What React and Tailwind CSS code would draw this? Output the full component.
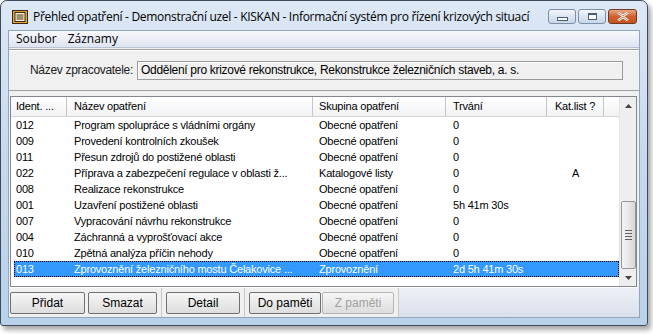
import React from "react";

const rows = [
  ["012", "Program spolupráce s vládními orgány", "Obecné opatření", "0", ""],
  ["009", "Provedení kontrolních zkoušek", "Obecné opatření", "0", ""],
  ["011", "Přesun zdrojů do postižené oblasti", "Obecné opatření", "0", ""],
  ["022", "Příprava a zabezpečení regulace v oblasti ž...", "Katalogové listy", "0", "A"],
  ["008", "Realizace rekonstrukce", "Obecné opatření", "0", ""],
  ["001", "Uzavření postižené oblasti", "Obecné opatření", "5h 41m 30s", ""],
  ["007", "Vypracování návrhu rekonstrukce", "Obecné opatření", "0", ""],
  ["004", "Záchranná a vyprošťovací akce", "Obecné opatření", "0", ""],
  ["010", "Zpětná analýza příčin nehody", "Obecné opatření", "0", ""],
  ["013", "Zprovoznění železničního mostu Čelakovice ...", "Zprovoznění", "2d 5h 41m 30s", ""],
];

const SELECTED = "013";

function AppIcon() {
  return (
    <svg width="16" height="14" viewBox="0 0 16 14">
      <rect x="0.5" y="0.5" width="15" height="13" fill="#e9a23b" stroke="#3a2a10" />
      <rect x="3" y="2.5" width="10" height="9" fill="#fff7d8" stroke="#3a2a10" />
      <line x1="4.5" y1="5" x2="11.5" y2="5" stroke="#3a2a10" />
      <line x1="4.5" y1="7" x2="11.5" y2="7" stroke="#3a2a10" />
      <line x1="4.5" y1="9" x2="11.5" y2="9" stroke="#3a2a10" />
    </svg>
  );
}

function WinButton({ kind }) {
  const base =
    "h-[15px] rounded-[3px] border flex items-center justify-center shrink-0";
  if (kind === "close") {
    return (
      <div className={`${base} w-[29px] border-[#6b3a22] bg-gradient-to-b from-[#e9a783] via-[#d0602e] to-[#c4541f]`}>
        <svg width="12" height="9" viewBox="0 0 12 9">
          <path d="M1 0.5 L6 4 L11 0.5 M1 8.5 L6 5 L11 8.5" stroke="#ffffff" strokeWidth="2.4" fill="none" />
          <path d="M1 0.5 L6 4 L11 0.5 M1 8.5 L6 5 L11 8.5" stroke="#7a3a1a" strokeWidth="0.6" fill="none" />
        </svg>
      </div>
    );
  }
  return (
    <div className={`${base} w-[28px] border-[#7d8ea6] bg-gradient-to-b from-[#f2f6fb] via-[#dbe5f2] to-[#c9d7ea]`}>
      {kind === "min" ? (
        <div className="w-[11px] h-[4px] mt-[5px] border border-[#4c5c74] bg-white" />
      ) : (
        <div className="w-[9px] h-[7px] border border-[#4c5c74] border-t-2 bg-white" />
      )}
    </div>
  );
}

function Button({ children, disabled, w }) {
  return (
    <div
      className={`${w} h-[22px] border rounded-[2px] flex items-center justify-center text-[12px] bg-gradient-to-b from-[#f6f6f6] to-[#dddddd] ${
        disabled ? "border-[#b5b5b5] text-[#a0a0a0]" : "border-[#707070] text-black"
      }`}
    >
      {children}
    </div>
  );
}

export default function App() {
  return (
    <div
      className="w-[653px] h-[334px] bg-white overflow-hidden"
      style={{ fontFamily: '"Liberation Sans", Arial, sans-serif' }}
    >
      <div className="w-[648px] h-[326px] rounded-t-[7px] rounded-b-[3px] border border-[#3e4a5a] bg-gradient-to-b from-[#dde8f5] via-[#c6d8ee] to-[#b9d1ea] shadow-[3px_4px_5px_rgba(0,0,0,0.35)] flex flex-col">
        {/* title bar */}
        <div className="h-[29px] flex items-center pl-[11px] pr-[10px] pt-[3px] shrink-0">
          <AppIcon />
          <div
            className="ml-[5px] text-[12px] text-black flex-1 min-w-0 whitespace-nowrap overflow-hidden tracking-[-0.3px]"
            style={{ fontFamily: '"Open Sans", "Noto Sans", sans-serif' }}
          >
            Přehled opatření - Demonstrační uzel - KISKAN - Informační systém pro řízení krizových situací
          </div>
          <div className="flex items-center mt-[-2px]">
            <WinButton kind="min" />
            <div className="w-[2px]" />
            <WinButton kind="max" />
            <div className="w-[2px]" />
            <WinButton kind="close" />
          </div>
        </div>

        {/* client area */}
        <div className="mx-[7px] flex-1 flex flex-col border border-[#93a5bd] bg-[#f0f0f0] mb-[7px]">
          {/* menu */}
          <div
            className="h-[17px] flex items-center gap-[11px] px-[7px] text-[12px] bg-gradient-to-b from-[#f7f8fc] to-[#dfe4f0] border-b border-[#b9c3d6]"
            style={{ fontFamily: '"Open Sans", "Noto Sans", sans-serif' }}
          >
            <span>Soubor</span>
            <span>Záznamy</span>
          </div>

          {/* name group */}
          <div className="h-[42px] mt-[1px] border-t border-b border-[#a0a0a0] flex items-center pl-[21px] pr-[16px] shadow-[inset_0_1px_0_#ffffff]">
            <span className="text-[12px] text-[#202020] w-[107px] tracking-[-0.3px]">Název zpracovatele:</span>
            <div className="flex-1 h-[19px] border border-[#9a9a9a] shadow-[inset_1px_1px_0_#ffffff] flex items-center px-[3px] text-[12px] tracking-[-0.3px]">
              Oddělení pro krizové rekonstrukce, Rekonstrukce železničních staveb, a. s.
            </div>
          </div>

          {/* list */}
          <div className="mt-[5px] ml-[1px] mr-[2px] h-[191px] border border-[#828790] bg-white flex text-[11px] tracking-[-0.2px]">
            <div className="flex-1 flex flex-col">
              <div className="h-[20px] flex bg-gradient-to-b from-[#ffffff] to-[#f1f2f4] border-b border-[#d5d5d5]">
                <div className="w-[56px] pl-[5px] border-r border-[#c5c5c5] flex items-center">Ident. ...</div>
                <div className="w-[246px] pl-[7px] border-r border-[#c5c5c5] flex items-center">Název opatření</div>
                <div className="w-[133px] pl-[6px] border-r border-[#c5c5c5] flex items-center">Skupina opatření</div>
                <div className="w-[101px] pl-[7px] border-r border-[#c5c5c5] flex items-center">Trvání</div>
                <div className="w-[57px] border-r border-[#c5c5c5] flex items-center justify-center">Kat.list ?</div>
                <div className="flex-1" />
              </div>
              <div className="flex flex-col">
                {rows.map((r) => {
                  const sel = r[0] === SELECTED;
                  return (
                    <div
                      key={r[0]}
                      className={`h-[16px] ml-[3px] flex items-center ${
                        sel
                          ? "bg-[#3399ff] text-white outline outline-1 outline-dotted outline-[#000000] -outline-offset-1"
                          : "text-black"
                      }`}
                    >
                      <div className="w-[53px] pl-[2px] whitespace-nowrap">{r[0]}</div>
                      <div className="w-[246px] pl-[7px] whitespace-nowrap overflow-hidden">{r[1]}</div>
                      <div className="w-[133px] pl-[6px] whitespace-nowrap">{r[2]}</div>
                      <div className="w-[101px] pl-[7px] whitespace-nowrap">{r[3]}</div>
                      <div className="w-[57px] text-center">{r[4]}</div>
                      <div className="flex-1" />
                    </div>
                  );
                })}
              </div>
            </div>

            {/* scrollbar */}
            <div className="w-[17px] bg-[#eeeeee] border-l border-[#e4e4e4] flex flex-col items-center">
              <div className="h-[17px] w-full flex items-center justify-center">
                <svg width="7" height="4" viewBox="0 0 7 4">
                  <path d="M0 4 L3.5 0 L7 4 Z" fill="#404040" />
                </svg>
              </div>
              <div className="flex-1 w-full" />
              <div className="h-[68px] w-[15px] rounded-[2px] border border-[#979797] bg-gradient-to-r from-[#f4f4f4] via-[#e8e8e8] to-[#d6d6d6] flex flex-col items-center justify-center gap-[2px]">
                <div className="w-[7px] h-[1px] bg-[#606060]" />
                <div className="w-[7px] h-[1px] bg-[#606060]" />
                <div className="w-[7px] h-[1px] bg-[#606060]" />
                <div className="w-[7px] h-[1px] bg-[#606060]" />
              </div>
              <div className="h-[17px] w-full flex items-center justify-center">
                <svg width="7" height="4" viewBox="0 0 7 4">
                  <path d="M0 0 L3.5 4 L7 0 Z" fill="#404040" />
                </svg>
              </div>
            </div>
          </div>

          {/* toolbar */}
          <div className="flex-1 flex items-center pl-[1px] border-t border-[#ffffff]">
            <div className="flex items-center gap-[3px] h-full pr-[4px]">
              <Button w="w-[75px]">Přidat</Button>
              <Button w="w-[69px]">Smazat</Button>
            </div>
            <div className="flex items-center h-full px-[4px] border-l border-[#c8c8c8]">
              <Button w="w-[74px]">Detail</Button>
            </div>
            <div className="flex items-center gap-[1px] h-full px-[4px] border-l border-[#c8c8c8] border-r">
              <Button w="w-[72px]">Do paměti</Button>
              <Button w="w-[72px]" disabled>Z paměti</Button>
            </div>
            <div className="flex-1 h-full bg-gradient-to-b from-[#edf0f6] to-[#dae0eb]" />
          </div>
        </div>
      </div>
    </div>
  );
}
